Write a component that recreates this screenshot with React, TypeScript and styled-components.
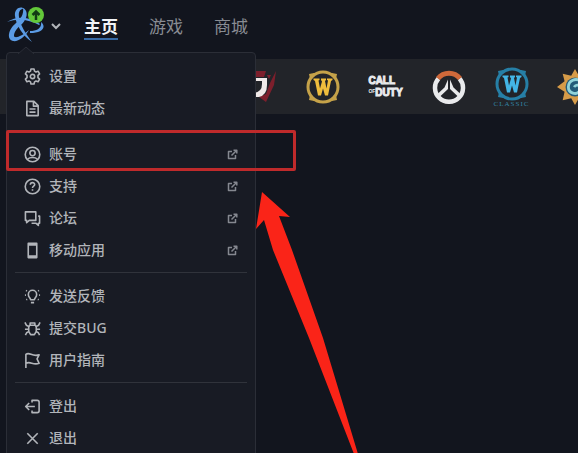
import React from "react";
import styled, { createGlobalStyle, css } from "styled-components";

const GlobalStyle = createGlobalStyle`
  * { box-sizing: border-box; }
  html, body { margin: 0; background: #12151e; }
  body {
    overflow: hidden;
    font-family: "Noto Sans", "Noto Sans CJK SC", sans-serif;
    color: #b2b5ba;
  }
  button { font: inherit; color: inherit; background: none; border: 0; padding: 0; cursor: pointer; }
  a { color: inherit; text-decoration: none; }
  svg { display: block; flex: none; }
`;

const Page = styled.div`
  position: relative;
  min-height: 100vh;
  overflow: hidden;
`;

const Header = styled.header`
  display: flex;
  align-items: center;
  height: 52px;
  padding-left: 6px;
`;

const LogoButton = styled.button`
  display: flex;
  align-items: center;
  gap: 4px;
`;

const Tabs = styled.nav`
  display: flex;
  gap: 31px;
  margin-left: 22px;
`;

const Tab = styled.a<{ $active?: boolean }>`
  height: 28px;
  line-height: 28px;
  font-family: "Noto Sans CJK SC", sans-serif;
  font-size: 17px;
  color: #898c93;
  border-bottom: 2px solid transparent;
  ${(p) =>
    p.$active &&
    css`
      color: #f2f4f7;
      font-weight: 700;
      border-bottom-color: #376aa5;
    `}
`;

const GameBar = styled.div`
  display: flex;
  align-items: center;
  height: 55px;
  margin-top: 7px;
  padding-left: 228px;
  background: #222429;
`;

const Game = styled.button`
  display: flex;
  flex: none;
  flex-direction: column;
  align-items: center;
  justify-content: center;
  width: 63px;
  height: 55px;
`;

const GameCaption = styled.span`
  font-family: "Liberation Serif", serif;
  font-size: 7px;
  line-height: 6px;
  letter-spacing: 1px;
  color: #3384a8;
`;

const WordMark = styled.span`
  display: flex;
  flex-direction: column;
  font-family: "Liberation Sans", sans-serif;
  font-weight: 700;
  font-size: 10px;
  line-height: 12px;
  text-align: left;
  color: #e9eaec;
  -webkit-text-stroke: 1px #e9eaec;
`;

const WordMarkRow = styled.span`
  display: flex;
  align-items: flex-start;
`;

const SmallOf = styled.span`
  font-size: 5px;
  line-height: 8px;
  -webkit-text-stroke: 0;
`;

const Menu = styled.nav`
  position: absolute;
  z-index: 2;
  top: 52px;
  left: 6px;
  width: 250px;
  min-height: 420px;
  padding: 7px 8px;
  background: #181b24;
  border: 1px solid #2b2e37;
  border-radius: 4px;
`;

const Pointer = styled.svg`
  position: absolute;
  top: -7px;
  left: 11px;
`;

const Group = styled.ul`
  list-style: none;
  margin: 0;
  padding: 0;
  & + & {
    border-top: 1px solid #30333b;
    margin-top: 6px;
    padding-top: 7px;
  }
`;

const Entry = styled.button`
  display: flex;
  align-items: center;
  gap: 8px;
  width: 100%;
  height: 32px;
  padding: 0 9px;
  font-size: 14px;
  font-weight: 500;
  line-height: 20px;
`;

const EntryLabel = styled.span`
  flex: 1;
  text-align: left;
`;

const Highlight = styled.div`
  position: absolute;
  z-index: 3;
  top: 130px;
  left: 6px;
  width: 290px;
  height: 41px;
  border: 3px solid #bf2a2b;
  border-radius: 2px;
  pointer-events: none;
`;

const ArrowMark = styled.svg`
  position: absolute;
  z-index: 3;
  top: 190px;
  left: 254px;
  pointer-events: none;
`;

const paths: Record<string, React.ReactNode> = {
  gear: (
    <>
      <path d="M7.4 1h3.2l.5 2.3 1.6.9 2.2-.8 1.6 2.8-1.7 1.6v2.4l1.700 1.600-1.600 2.800-2.200-.8-1.600.9-.5 2.300H7.400l-.5-2.300-1.600-.9-2.200.8-1.600-2.800 1.700-1.600V7.800L1.500 6.200l1.600-2.800 2.200.8 1.600-.9z" />
      <circle cx="9" cy="9" r="2.300" />
    </>
  ),
  news: <path d="M3 1.500h7.500L15 6v10.500H3zM10 2v4.500h4.500M5.800 9.500h6.400M5.800 12.800h6.400" />,
  account: (
    <>
      <circle cx="9" cy="9" r="7.700" />
      <circle cx="9" cy="7.500" r="2.800" />
      <path d="M4 13.800c2-2.200 8-2.200 10 0" />
    </>
  ),
  help: (
    <>
      <circle cx="9" cy="9" r="7.700" />
      <path d="M6.700 7.200c0-3 4.600-3 4.600-.3 0 1.700-2.300 1.800-2.300 3.600M9 12v1.500" />
    </>
  ),
  forum: <path d="M1.500 2h11v9H5.500L2.800 13.500V11H1.500zM15 6.500h1.500V14h-1.300v2.300L12.500 14H8" />,
  phone: <path d="M4.500 1.500h9v15h-9zM4.500 3h9M4.500 15h9" />,
  bulb: (
    <path d="M7 12.500c0-2-2.400-2.600-2.400-5.700a4.400 4.400 0 0 1 8.800 0c0 3.100-2.400 3.700-2.400 5.700zM7.300 15.500h3.400M1 7.500h1M16 7.500h1M2.200 2.500l.8.700M15.800 2.500l-.8.700M2.500 12.500l.8-.6M15.500 12.500l-.8-.6" />
  ),
  bug: (
    <path d="M6 5.500h6l1 2v4.500L11 15.500H7L5 12V7.500zM6.500 5V3.200h5V5M1 2.500l1.500 3L5.200 7M17 2.500l-1.500 3L12.800 7M1 9.800h4M17 9.800h-4M1.500 16l1.300-2.500L5.200 12M16.500 16l-1.300-2.500L12.800 12" />
  ),
  flag: <path d="M2 17V2.500C6-.5 8.500 5.500 16 3l-2.200 4.300L16 12C9 14.500 7 9 2 12" />,
  logout: <path d="M8.500 4.800V2.500H14a2 2 0 0 1 2 2v9a2 2 0 0 1-2 2H8.500v-2.300M11.500 9H2M5.500 5.300L1.800 9l3.700 3.700" />,
  close: <path d="M3.500 3.500l11 11M14.500 3.500l-11 11" />,
};

const Icon = ({ name }: { name: string }) => (
  <svg width="17" height="17" viewBox="0 0 18 18" fill="none" stroke="#b2b5ba" strokeWidth="1.700" strokeLinejoin="round" aria-hidden="true">
    {paths[name]}
  </svg>
);

const ExternalIcon = () => (
  <svg width="11" height="11" viewBox="0 0 11 11" fill="none" stroke="#858890" strokeWidth="1.500" strokeLinejoin="round" aria-hidden="true">
    <path d="M5 2.500H1.500v7h7V6M4.500 6.500L9.500 1.500M6.500 1.200H9.800v3.300" />
  </svg>
);

type Item = { icon: string; label: string; external?: boolean };

const groups: Item[][] = [
  [
    { icon: "gear", label: "设置" },
    { icon: "news", label: "最新动态" },
  ],
  [
    { icon: "account", label: "账号", external: true },
    { icon: "help", label: "支持", external: true },
    { icon: "forum", label: "论坛", external: true },
    { icon: "phone", label: "移动应用", external: true },
  ],
  [
    { icon: "bulb", label: "发送反馈" },
    { icon: "bug", label: "提交BUG" },
    { icon: "flag", label: "用户指南" },
  ],
  [
    { icon: "logout", label: "登出" },
    { icon: "close", label: "退出" },
  ],
];

const BattleLogo = () => (
  <svg width="40" height="40" viewBox="0 0 40 40" fill="none" aria-hidden="true">
    <g fill="#5b9be4">
      <path d="M19 3C14-1 8 3 9 10c1 9 8 20 17 26C20 28 14 19 13 11c-1-6 2-9 6-8z" />
      <path d="M17 2c6 3 4 11-1 16C11 22 8 26 8 30c1 3 8 0 15-6-4 7-11 12-16 11-7-2-4-12 2-17C15 13 18 8 17 2z" />
      <path d="M1 16c10-7 24-5 33 2l-1 1C24 14 12 12 1 16z" />
      <path d="M35 16c6 5 1 11-11 11v-2c7 0 12-3 11-9z" />
    </g>
    <circle cx="30" cy="9" r="8" fill="#63c83a" />
    <path d="M30 14V6M26.500 9L30 5.500 33.500 9" stroke="#123c14" strokeWidth="2.500" />
  </svg>
);

const WowIcon = ({ ring, fill }: { ring: string; fill: string }) => (
  <svg width="34" height="34" viewBox="0 0 34 34" aria-hidden="true">
    <path d="M3 4l5-1h18l5 1-1 5v16l1 5-5 1H8l-5-1 1-5V9z" fill={ring} />
    <circle cx="17" cy="17" r="15" fill="#222429" stroke={ring} strokeWidth="3" />
    <path d="M7.500 8.500h6v1.500l-1 .5 1.500 8 2-7-1-1.500V8.500h5v1.500l-1 1 1.500 7.500 1.500-8-1-.5V8.500h5.500V10l-1.500 1-3 14.500H19l-2-7-2 7h-3L9 11l-1.500-1z" fill={fill} />
  </svg>
);

const App = () => (
  <>
    <GlobalStyle />
    <Page>
      <Header>
        <LogoButton aria-label="Battle.net" aria-expanded="true">
          <BattleLogo />
          <svg width="12" height="12" viewBox="0 0 12 12" fill="none" stroke="#b2b5ba" strokeWidth="2" aria-hidden="true">
            <path d="M2 4l4 4 4-4" />
          </svg>
        </LogoButton>
        <Tabs>
          <Tab href="#home" $active>主页</Tab>
          <Tab href="#games">游戏</Tab>
          <Tab href="#shop">商城</Tab>
        </Tabs>
      </Header>
      <GameBar>
        <Game aria-label="Diablo IV">
          <svg width="44" height="36" viewBox="0 0 44 36" aria-hidden="true">
            <path d="M16 2h12l-2 6H16zM29 6h4l-2 4zM32 14l6-12-2 14-8 17-7-5 7-3z" fill="#7d1f2c" />
            <path d="M16 9h13v7q0 10-8 12h-5v-4q8-1 8-9v-3h-8z" fill="#f0e9e8" />
          </svg>
        </Game>
        <Game aria-label="World of Warcraft"><WowIcon ring="#c5a249" fill="#efbd3d" /></Game>
        <Game>
          <WordMark>
            <span>CALL</span>
            <WordMarkRow><SmallOf>OF</SmallOf>DUTY</WordMarkRow>
          </WordMark>
        </Game>
        <Game aria-label="Overwatch">
          <svg width="34" height="34" viewBox="0 0 34 34" fill="none" aria-hidden="true">
            <path d="M6.500 8.500A14 14 0 1 0 27.500 8.500" stroke="#e9eaec" strokeWidth="4.500" />
            <path d="M6 8.500A14 14 0 0 1 28 8.500" stroke="#d0693a" strokeWidth="5" />
            <path d="M16 9.500V19l-9 8.500-1.500-3.500 7-6.500zM18 9.500V19l9 8.500 1.500-3.500-7-6.500z" fill="#e9eaec" />
          </svg>
        </Game>
        <Game>
          <WowIcon ring="#267fa6" fill="#43b5e5" />
          <GameCaption>CLASSIC</GameCaption>
        </Game>
        <Game aria-label="Hearthstone">
          <svg width="36" height="36" viewBox="0 0 38 38" fill="none" aria-hidden="true">
            <path d="M19 0l4 7 9-2-2 8 8 6-8 5 2 9-9-2-4 7-4-7-9 2 2-9-8-5 8-6-2-8 9 2z" fill="#d69b48" />
            <circle cx="19" cy="19" r="10" fill="#235b79" />
            <path d="M25 13c-5-4-13-1-13 6s9 9 12 4-3-8-6-4" stroke="#91d3d9" strokeWidth="3" />
          </svg>
        </Game>
      </GameBar>
      <Menu aria-label="Battle.net">
        <Pointer width="16" height="8" viewBox="0 0 16 8" aria-hidden="true">
          <path d="M0 8L8 1l8 7" fill="#181b24" stroke="#2b2e37" />
        </Pointer>
        {groups.map((items) => (
          <Group key={items[0].label}>
            {items.map((item) => (
              <li key={item.label}>
                <Entry>
                  <Icon name={item.icon} />
                  <EntryLabel>{item.label}</EntryLabel>
                  {item.external && <ExternalIcon />}
                </Entry>
              </li>
            ))}
          </Group>
        ))}
      </Menu>
      <Highlight />
      <ArrowMark width="106" height="264" viewBox="254 190 106 264" aria-hidden="true">
        <path d="M262 192L290 217 279 216 292 250 323 338 358 454H354L309 338 273 250 264 220 256 229z" fill="#fa2418" />
      </ArrowMark>
    </Page>
  </>
);

export default App;
